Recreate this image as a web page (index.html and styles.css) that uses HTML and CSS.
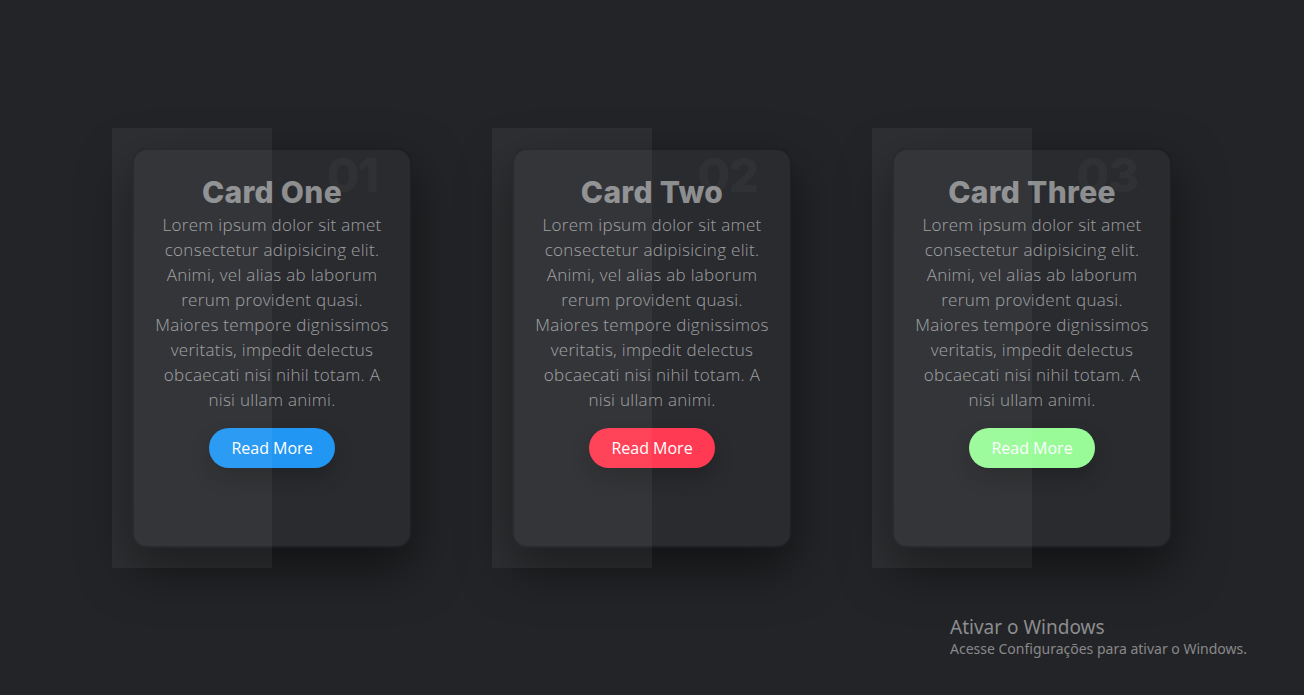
FILE: index.html
```html
<!DOCTYPE html>
<html lang="pt">
<head>
<meta charset="utf-8">
<title>Cards</title>
<link rel="stylesheet" href="styles.css">
</head>
<body>
<main class="container">
  <div class="card">
    <div class="content">
      <span class="num">01</span>
      <h3 class="title">Card One</h3>
      <p class="text">Lorem ipsum dolor sit amet<br>consectetur adipisicing elit.<br>Animi, vel alias ab laborum<br>rerum provident quasi.<br>Maiores tempore dignissimos<br>veritatis, impedit delectus<br>obcaecati nisi nihil totam. A<br>nisi ullam animi.</p>
      <a class="btn btn-blue" href="#">Read More</a>
    </div>
  </div>
  <div class="card">
    <div class="content">
      <span class="num">02</span>
      <h3 class="title">Card Two</h3>
      <p class="text">Lorem ipsum dolor sit amet<br>consectetur adipisicing elit.<br>Animi, vel alias ab laborum<br>rerum provident quasi.<br>Maiores tempore dignissimos<br>veritatis, impedit delectus<br>obcaecati nisi nihil totam. A<br>nisi ullam animi.</p>
      <a class="btn btn-red" href="#">Read More</a>
    </div>
  </div>
  <div class="card">
    <div class="content">
      <span class="num">03</span>
      <h3 class="title">Card Three</h3>
      <p class="text">Lorem ipsum dolor sit amet<br>consectetur adipisicing elit.<br>Animi, vel alias ab laborum<br>rerum provident quasi.<br>Maiores tempore dignissimos<br>veritatis, impedit delectus<br>obcaecati nisi nihil totam. A<br>nisi ullam animi.</p>
      <a class="btn btn-green" href="#">Read More</a>
    </div>
  </div>
</main>
<div class="watermark">
  <div class="wm-title">Ativar o Windows</div>
  <div class="wm-sub">Acesse Configurações para ativar o Windows.</div>
</div>
</body>
</html>
```
FILE: styles.css
```css
* { box-sizing: border-box; }
html, body { margin: 0; padding: 0; }
body {
  background: #232427;
  min-height: 100vh;
  font-family: "Open Sans", "Noto Sans", sans-serif;
  overflow: hidden;
}
.container {
  min-height: 100vh;
  display: flex;
  justify-content: center;
  align-items: center;
  gap: 60px;
  padding-top: 1px;
}
.card {
  position: relative;
  width: 320px;
  height: 440px;
  padding: 20px;
  display: flex;
}
.card::before {
  content: "";
  position: absolute;
  top: 0;
  left: 0;
  width: 50%;
  height: 100%;
  background: rgba(255, 255, 255, 0.05);
  pointer-events: none;
  z-index: 2;
}
.content {
  position: relative;
  flex: 1;
  background: #2a2b2f;
  border: 2px solid #1e1f23;
  border-radius: 15px;
  box-shadow: 0 20px 50px rgba(0, 0, 0, 0.5);
  display: flex;
  flex-direction: column;
  align-items: center;
  padding: 24px 6px 0;
  text-align: center;
}
.num {
  position: absolute;
  top: -3px;
  right: 32px;
  font-family: "Inter", sans-serif;
  font-weight: 800;
  font-size: 47px;
  line-height: 1.2;
  color: rgba(255, 255, 255, 0.055);
  letter-spacing: -1px;
}
.title {
  position: relative;
  margin: 0 0 2px;
  font-family: "Inter", sans-serif;
  font-weight: 800;
  font-size: 30px;
  line-height: 36px;
  letter-spacing: 0.3px;
  color: rgba(255, 255, 255, 0.47);
}
.text {
  margin: 0;
  font-size: 17px;
  font-weight: 300;
  line-height: 25px;
  letter-spacing: 0.3px;
  color: rgba(255, 255, 255, 0.55);
  white-space: nowrap;
}
.btn {
  margin-top: 16px;
  display: inline-block;
  width: 126px;
  height: 40px;
  line-height: 40px;
  border-radius: 20px;
  color: #fff;
  text-decoration: none;
  font-size: 16px;
  font-weight: 400;
  box-shadow: 0 10px 20px rgba(0, 0, 0, 0.2);
}
.btn-blue { background: #2196f3; }
.btn-red { background: #ff3a52; }
.btn-green { background: #98fb98; }
.watermark {
  position: absolute;
  left: 950px;
  top: 615px;
  color: #8d8d8f;
  font-family: "Noto Sans", "Open Sans", sans-serif;
}
.wm-title {
  font-size: 19px;
  line-height: 24px;
}
.wm-sub {
  font-size: 14px;
  line-height: 20px;
  color: #88888a;
}
```
